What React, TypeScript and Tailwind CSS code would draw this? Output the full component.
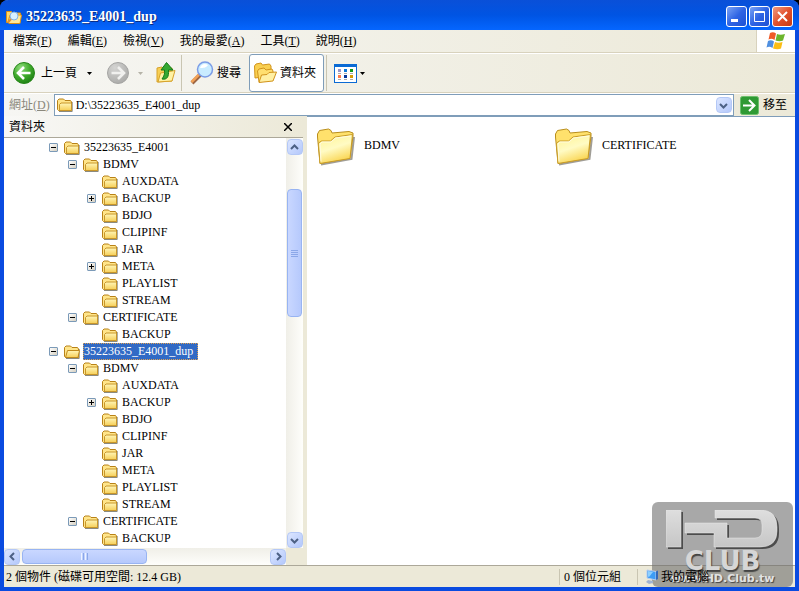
import { useState } from "react";
import type { ReactNode } from "react";

type TreeNode = {
	id: number;
	name: string;
	level: number;
	toggle?: "plus" | "minus";
};

const TREE: TreeNode[] = [
	{ id: 1, name: "35223635_E4001", level: 0, toggle: "minus" },
	{ id: 2, name: "BDMV", level: 1, toggle: "minus" },
	{ id: 3, name: "AUXDATA", level: 2 },
	{ id: 4, name: "BACKUP", level: 2, toggle: "plus" },
	{ id: 5, name: "BDJO", level: 2 },
	{ id: 6, name: "CLIPINF", level: 2 },
	{ id: 7, name: "JAR", level: 2 },
	{ id: 8, name: "META", level: 2, toggle: "plus" },
	{ id: 9, name: "PLAYLIST", level: 2 },
	{ id: 10, name: "STREAM", level: 2 },
	{ id: 11, name: "CERTIFICATE", level: 1, toggle: "minus" },
	{ id: 12, name: "BACKUP", level: 2 },
	{ id: 13, name: "35223635_E4001_dup", level: 0, toggle: "minus" },
	{ id: 14, name: "BDMV", level: 1, toggle: "minus" },
	{ id: 15, name: "AUXDATA", level: 2 },
	{ id: 16, name: "BACKUP", level: 2, toggle: "plus" },
	{ id: 17, name: "BDJO", level: 2 },
	{ id: 18, name: "CLIPINF", level: 2 },
	{ id: 19, name: "JAR", level: 2 },
	{ id: 20, name: "META", level: 2 },
	{ id: 21, name: "PLAYLIST", level: 2 },
	{ id: 22, name: "STREAM", level: 2 },
	{ id: 23, name: "CERTIFICATE", level: 1, toggle: "minus" },
	{ id: 24, name: "BACKUP", level: 2 },
];

const INDENT = ["pl-[45px]", "pl-[64px]", "pl-[83px]"];

const MENUS = [
	{ label: "檔案", accel: "F" },
	{ label: "編輯", accel: "E" },
	{ label: "檢視", accel: "V" },
	{ label: "我的最愛", accel: "A" },
	{ label: "工具", accel: "T" },
	{ label: "說明", accel: "H" },
];

function SmallFolder({ open }: { open?: boolean }) {
	return (
		<svg width="16" height="16" viewBox="0 0 16 16" className="shrink-0" aria-hidden="true">
			<defs>
				<linearGradient id="folderFill" x1="0" y1="0" x2="0" y2="1">
					<stop offset="0" stopColor="#fff6b8" />
					<stop offset="1" stopColor="#f6cf58" />
				</linearGradient>
			</defs>
			<path d="M2 14.500h13.200V5" fill="none" stroke="#8a8a80" />
			<path d="M.5 12.500V3.500L2 2h4.500L8 3.500h5.500L14.500 5v8.500h-13z" fill="#ffe58a" stroke="#b88218" />
			{open ? (
				<path d="M1.500 13.500 3.500 6.500h12l-1.500 7z" fill="url(#folderFill)" stroke="#c08a1c" />
			) : (
				<path d="M2.500 13.500V7.500L4 6h10.500v7.500z" fill="url(#folderFill)" stroke="#c8962a" />
			)}
		</svg>
	);
}

function LargeFolder() {
	return (
		<svg width="38" height="38" viewBox="0 0 38 38" aria-hidden="true">
			<defs>
				<linearGradient id="bigFront" x1=".3" y1="0" x2=".7" y2="1">
					<stop offset="0" stopColor="#fff59a" />
					<stop offset=".45" stopColor="#fffbc4" />
					<stop offset="1" stopColor="#f9cf3e" />
				</linearGradient>
			</defs>
			<path d="M4 36.500 34.500 31 37 9" fill="none" stroke="#77746a" strokeWidth="2" opacity=".7" />
			<path d="M.5 9V6L2.500 2.500l9-1.500L14 2.500l1 2.500 17-1.500 4 1.500v3L33 30 3 35.500z" fill="#ffe16c" stroke="#b98e1d" />
			<path d="M3 35.500 1.500 15l3-2h9L18 9l17.500-2.500L33 30.500z" fill="url(#bigFront)" stroke="#c99c27" />
			<path d="M4 33.500 3 16l2-2h9l4.500-4L34 8" fill="none" stroke="#fffbe0" />
		</svg>
	);
}

function TitleIcon() {
	return (
		<svg width="16" height="16" viewBox="0 0 16 16" aria-hidden="true">
			<path d="M.5 13.500V2.500h5L7 4h7.500v4l-1 6z" fill="#ffd869" stroke="#d89018" />
			<path d="M2 13 4 6h11.500L14 14.500H3z" fill="#ffe99a" stroke="#d89018" />
			<circle cx="8" cy="7" r="4" fill="#d7f0ff" stroke="#7fb2e8" />
			<path d="m5 10-3 3.500" stroke="#e09038" strokeWidth="2" />
		</svg>
	);
}

function RoundArrow({ forward }: { forward?: boolean }) {
	return (
		<svg width="24" height="24" viewBox="0 0 24 24" aria-hidden="true">
			<defs>
				<radialGradient id="backBall" cx=".35" cy=".25" r=".8">
					<stop offset="0" stopColor="#8fdc7c" />
					<stop offset=".55" stopColor="#3faa2b" />
					<stop offset="1" stopColor="#1d7f13" />
				</radialGradient>
				<radialGradient id="fwdBall" cx=".35" cy=".25" r=".8">
					<stop offset="0" stopColor="#d4d4d2" />
					<stop offset="1" stopColor="#aaaaa8" />
				</radialGradient>
			</defs>
			<circle
				cx="12"
				cy="12"
				r="10.500"
				fill={forward ? "url(#fwdBall)" : "url(#backBall)"}
				stroke={forward ? "#a5a5a3" : "#268619"}
			/>
			<path
				d={forward ? "M5.500 12h12M12 6l6 6-6 6" : "M18.500 12h-12M12 6l-6 6 6 6"}
				fill="none"
				stroke={forward ? "#f0f0ee" : "#fff"}
				strokeWidth="2.600"
			/>
		</svg>
	);
}

function UpFolder() {
	return (
		<svg width="20" height="24" viewBox="0 0 20 24" aria-hidden="true">
			<path d="M1 21V7l5-1 2 2 8-1v13z" fill="#f7cf55" stroke="#d7a22a" />
			<path d="m2 21 2.500-9L19 9.500 16 20z" fill="#fff2a4" stroke="#d7a22a" />
			<path d="M6 18c5 1 7-2 6.500-9H17L10.500 1.500 5 9h3.500c.5 4-.5 6-2.500 9z" fill="#35a832" stroke="#147b18" />
		</svg>
	);
}

function SearchIcon() {
	return (
		<svg width="24" height="24" viewBox="0 0 24 24" aria-hidden="true">
			<path d="m2 22 8-8" stroke="#9b6544" strokeWidth="4" />
			<path d="m1.500 21 7.500-7.500" stroke="#f2a257" strokeWidth="2.500" />
			<circle cx="15" cy="8.500" r="7.500" fill="#c9ecff" stroke="#7b9ce6" strokeWidth="1.500" />
			<path d="M10 7c1-4 5-5 8-3-2 3-5 3-8 3z" fill="#fff" />
		</svg>
	);
}

function FoldersIcon() {
	return (
		<svg width="24" height="22" viewBox="0 0 24 22" aria-hidden="true">
			<path d="m1 16-.5-12L2 2l5-1 1.500 2 7-1 1.500 2v10z" fill="#f9cf50" stroke="#d2941c" />
			<path d="M5 20 3.500 9 5 7l5-1 2 2 6-1 1 2v9z" fill="#ffdf70" stroke="#d2941c" />
			<path d="M5 20.500 7.500 13l5.500-.5 2-2 7.500-.5-3.500 9z" fill="#fff0a4" stroke="#d2941c" />
		</svg>
	);
}

function ViewsIcon() {
	const cells = ["#9a95c8", "#0b78d8", "#10981a", "#ff7a4a", "#06369a", "#d49a08"];
	return (
		<svg width="23" height="19" viewBox="0 0 23 19" aria-hidden="true">
			<rect x=".5" y=".5" width="22" height="18" fill="#fff" stroke="#0a6ad4" />
			<rect width="23" height="3" fill="#0a6ad4" />
			{cells.map((color, i) => (
				<g key={color}>
					<rect x={4 + (i % 3) * 6} y={i < 3 ? 5 : 11} width="3" height="3" fill={color} />
					<rect x={4 + (i % 3) * 6} y={i < 3 ? 9 : 15} width="3" height="1" fill="#aaa" />
				</g>
			))}
		</svg>
	);
}

function WindowsFlag() {
	return (
		<svg width="20" height="18" viewBox="0 0 20 18" aria-hidden="true">
			<path d="M4 1c2-1 4-1 6 .5L8.500 8C6.500 6.500 4.500 6.500 2.500 7.500z" fill="#ef5a28" />
			<path d="M11 2c2 1 5 1 8 0l-2 6.500c-2 1-5 1-7.500 0z" fill="#6cb52d" />
			<path d="M2 9c2-1 4-1 6 .5L6.500 16C4.500 14.500 2.500 14.500.5 15.500z" fill="#4f8fe0" />
			<path d="M9 10c2 1 5 1 7.500 0L15 16.500c-2 1-5 1-8 0z" fill="#fbbd14" />
		</svg>
	);
}

function ComputerIcon() {
	return (
		<svg width="14" height="16" viewBox="0 0 14 16" aria-hidden="true">
			<path d="m2 1 9 1.500V11L2 9z" fill="#3d9cf5" stroke="#b9cdee" />
			<path d="m3 2 5 1-4 5-1-.5z" fill="#8fd0ff" />
			<path d="m11 2.500 2-1V10l-2 1z" fill="#3568b8" />
			<path d="m3 11 5 1v2l-4 1-3-2z" fill="#9fb2d2" />
		</svg>
	);
}

function Chevron({ dir }: { dir: "up" | "down" | "left" | "right" }) {
	const d = {
		up: "M1 6 4.500 2.500 8 6",
		down: "M1 3 4.500 6.500 8 3",
		left: "M6 1 2.500 4.500 6 8",
		right: "M3 1 6.500 4.500 3 8",
	}[dir];
	return (
		<svg width="9" height="9" viewBox="0 0 9 9" aria-hidden="true">
			<path d={d} fill="none" stroke="#4d6185" strokeWidth="2" />
		</svg>
	);
}

function Caret({ color }: { color: string }) {
	return (
		<svg width="5" height="3" viewBox="0 0 5 3" aria-hidden="true">
			<path d="M0 0h5L2.500 3z" fill={color} />
		</svg>
	);
}

function ScrollButton({ dir, label }: { dir: "up" | "down" | "left" | "right"; label: string }) {
	return (
		<button
			type="button"
			aria-label={label}
			className="flex size-4 shrink-0 items-center justify-center rounded-sm border border-[#b4c8f6] bg-linear-to-br from-[#dce6ff] to-[#b4c8fb]"
		>
			<Chevron dir={dir} />
		</button>
	);
}

function CaptionButton({ label, close, children }: { label: string; close?: boolean; children: ReactNode }) {
	const color = close ? "from-[#f0997f] via-[#e2512c] to-[#c63a12]" : "from-[#7ba2f4] via-[#2f64e4] to-[#1c50d4]";
	return (
		<button
			type="button"
			aria-label={label}
			className={`flex size-[21px] items-center justify-center rounded-[3px] border border-white bg-linear-to-br ${color}`}
		>
			<svg width="15" height="15" viewBox="0 0 15 15" fill="none" stroke="#fff" aria-hidden="true">
				{children}
			</svg>
		</button>
	);
}

function Separator() {
	return <div className="h-9 w-px shrink-0 bg-[#c9c5b2]" />;
}

function TreeRow({ node, selected, onSelect }: { node: TreeNode; selected: boolean; onSelect: () => void }) {
	return (
		<li className={`flex h-[17px] items-center ${INDENT[node.level]}`}>
			{node.toggle ? (
				<button
					type="button"
					aria-label={node.toggle === "plus" ? "展開" : "摺疊"}
					className="mr-1.5 size-[9px] shrink-0 rounded-[1px] border border-[#7b9ab8] bg-linear-to-br from-white to-[#d5cfc0]"
				>
					<svg width="7" height="7" viewBox="0 0 7 7" stroke="#000" className="block" aria-hidden="true">
						<path d={node.toggle === "plus" ? "M1 3.500h5M3.500 1v5" : "M1 3.500h5"} />
					</svg>
				</button>
			) : (
				<span className="mr-1.5 w-[9px] shrink-0" />
			)}
			<SmallFolder open={selected} />
			<button
				type="button"
				onClick={onSelect}
				className={`ml-[3px] h-[17px] border border-dotted leading-[15px] whitespace-nowrap ${
					selected ? "border-[#e0a050] bg-[#316ac5] pr-1 text-white" : "border-transparent"
				}`}
			>
				{node.name}
			</button>
		</li>
	);
}

function FolderPane() {
	const [selectedId, setSelectedId] = useState(13);

	return (
		<aside className="flex w-[299px] shrink-0 flex-col bg-white">
			<div className="flex h-[22px] shrink-0 items-center justify-between border-b border-[#aca899] bg-linear-to-r from-[#f8f8f6] to-[#ece9d8] pr-[10px] pl-[5px]">
				<h2>資料夾</h2>
				<button type="button" aria-label="關閉" className="p-px">
					<svg width="8" height="8" viewBox="0 0 8 8" aria-hidden="true">
						<path d="m0 0 8 8M8 0 0 8" stroke="#000" strokeWidth="1.500" />
					</svg>
				</button>
			</div>
			<div className="flex min-h-0 flex-1">
				<ul className="min-w-0 flex-1 overflow-hidden pt-px">
					{TREE.map((node) => (
						<TreeRow
							key={node.id}
							node={node}
							selected={node.id === selectedId}
							onSelect={() => setSelectedId(node.id)}
						/>
					))}
				</ul>
				<div className="flex w-[17px] flex-col items-center bg-linear-to-r from-[#f0efe8] to-[#fefefb] pt-px">
					<ScrollButton dir="up" label="向上捲動" />
					<div className="mt-[34px] flex h-32 w-[15px] flex-col items-center justify-center gap-px rounded-sm border border-[#98b4f2] bg-linear-to-r from-[#c9d7ff] to-[#b6c9fc]">
						<i className="h-px w-[7px] bg-[#8ba7e8]" />
						<i className="h-px w-[7px] bg-[#8ba7e8]" />
						<i className="h-px w-[7px] bg-[#8ba7e8]" />
						<i className="h-px w-[7px] bg-[#8ba7e8]" />
					</div>
					<div className="flex-1" />
					<ScrollButton dir="down" label="向下捲動" />
				</div>
			</div>
			<div className="flex h-[17px] shrink-0">
				<div className="flex flex-1 items-center bg-linear-to-b from-[#f0efe8] to-[#fefefb]">
					<ScrollButton dir="left" label="向左捲動" />
					<div className="ml-0.5 flex h-[15px] w-[125px] items-center justify-center gap-px rounded-sm border border-[#98b4f2] bg-linear-to-b from-[#c9d7ff] to-[#b6c9fc]">
						<i className="h-[7px] w-px bg-[#eef3ff]" />
						<i className="h-[7px] w-px bg-[#8ba7e8]" />
						<i className="h-[7px] w-px bg-[#eef3ff]" />
						<i className="h-[7px] w-px bg-[#8ba7e8]" />
					</div>
					<div className="flex-1" />
					<ScrollButton dir="right" label="向右捲動" />
				</div>
				<div className="w-[17px] bg-[#ece9d8]" />
			</div>
		</aside>
	);
}

const CLUB_FRAME = "M19 13h42v15h28q7 0 7-7v-6q0-7-7-7H49V0h45q17 0 17 17v4q0 16-17 16H48V23H19z";

function ClubBadge() {
	return (
		<div className="pointer-events-none absolute right-0.5 bottom-0 flex h-[85px] w-[141px] flex-col items-center rounded-md bg-[#6e6e6e]/60 pt-2">
			<svg width="114" height="40" viewBox="0 0 114 40" role="img" aria-label="HD" className="shrink-0">
				<defs>
					<linearGradient id="steel" x1="0" y1="0" x2="0" y2="1">
						<stop offset="0" stopColor="#dedede" />
						<stop offset="1" stopColor="#c6c6c6" />
					</linearGradient>
				</defs>
				<g fill="#4c4c4c" transform="translate(2 2)">
					<rect width="15" height="37" />
					<path d={CLUB_FRAME} />
				</g>
				<g fill="url(#steel)" stroke="#e8e8e8" strokeWidth=".5">
					<rect width="15" height="37" />
					<path d={CLUB_FRAME} />
				</g>
			</svg>
			<div className="font-['DejaVu_Sans'] text-[26px] leading-[22px] font-bold text-[#d6d6d6] [text-shadow:1px_2px_1px_#444]">
				CLUB
			</div>
			<div className="font-['DejaVu_Sans'] text-[11px] leading-[14px] font-bold text-[#e2e2e2] [text-shadow:1px_1px_1px_#444]">
				www.HD.Club.tw
			</div>
		</div>
	);
}

export default function App() {
	const [address, setAddress] = useState("D:\\35223635_E4001_dup");

	return (
		<div className="h-screen bg-black font-['Liberation_Serif','Noto_Sans_CJK_TC',serif] text-[12px] leading-4 text-black">
			<div className="relative flex h-full flex-col rounded-t-lg border-x-4 border-b-4 border-[#0a4be0] bg-[#ece9d8]">
				<header className="-mx-1 flex h-[30px] shrink-0 items-center gap-1 rounded-t-lg bg-linear-to-b from-[#0a50d8] via-[#0054e3] to-[#0566ff] pt-[3px] pr-1.5 pl-1.5">
					<TitleIcon />
					<h1 className="flex-1 text-[14px] font-bold text-white [text-shadow:1px_1px_#0a2a80]">35223635_E4001_dup</h1>
					<div className="flex gap-0.5">
						<CaptionButton label="最小化">
							<path d="M2 11.500h7" strokeWidth="3" />
						</CaptionButton>
						<CaptionButton label="最大化">
							<path d="M2.500 2.500h10v10h-10zM2 3.500h11" />
						</CaptionButton>
						<CaptionButton label="關閉" close>
							<path d="m3 3 9 9M12 3l-9 9" strokeWidth="2" />
						</CaptionButton>
					</div>
				</header>

				<nav className="flex h-[23px] shrink-0 border-b border-[#d8d2bd] bg-linear-to-r from-[#f6f6f3] to-[#ece9d8] pl-px">
					<div className="flex flex-1 items-center">
						{MENUS.map((menu) => (
							<button key={menu.accel} type="button" className="px-2">
								{menu.label}(<u>{menu.accel}</u>)
							</button>
						))}
					</div>
					<div className="flex w-[39px] items-center justify-center border-l border-[#d8d2bd] bg-white">
						<WindowsFlag />
					</div>
				</nav>

				<div className="flex h-10 shrink-0 items-center border-y border-t-white border-b-[#d8d2bd] bg-linear-to-r from-[#f6f6f3] to-[#ece9d8] pl-2">
					<button type="button" className="flex items-center gap-[5px]">
						<RoundArrow />
						上一頁
					</button>
					<button type="button" aria-label="上一頁清單" className="ml-1 p-1.5">
						<Caret color="#000" />
					</button>
					<button type="button" aria-label="下一頁" disabled className="ml-2">
						<RoundArrow forward />
					</button>
					<button type="button" aria-label="下一頁清單" disabled className="px-2">
						<Caret color="#b5b3a8" />
					</button>
					<button type="button" aria-label="上移一層" className="mx-[5px]">
						<UpFolder />
					</button>
					<Separator />
					<button type="button" className="mx-2 flex items-center gap-[3px]">
						<SearchIcon />
						搜尋
					</button>
					<button
						type="button"
						aria-pressed="true"
						className="flex h-[38px] w-[75px] items-center gap-0.5 rounded-[3px] border border-[#7f9db9] bg-white pl-1"
					>
						<FoldersIcon />
						資料夾
					</button>
					<div className="w-0.5" />
					<Separator />
					<button type="button" aria-label="檢視" className="ml-[7px] flex items-center gap-[3px]">
						<ViewsIcon />
						<Caret color="#000" />
					</button>
				</div>

				<form
					className="flex h-[23px] shrink-0 items-center border-t border-white bg-linear-to-r from-[#f6f6f3] to-[#ece9d8] pl-[5px]"
					onSubmit={(e) => e.preventDefault()}
				>
					<label htmlFor="address" className="mr-1 text-[#8a887c]">
						網址(<u>D</u>)
					</label>
					<div className="flex h-[22px] flex-1 items-center border border-[#7f9db9] bg-white pr-px pl-0.5">
						<SmallFolder />
						<input
							id="address"
							value={address}
							onChange={(e) => setAddress(e.target.value)}
							className="ml-[3px] min-w-0 flex-1 outline-none"
						/>
						<ScrollButton dir="down" label="網址清單" />
					</div>
					<button type="submit" className="mx-1.5 flex items-center gap-1 pr-0.5">
						<svg width="19" height="19" viewBox="0 0 19 19" aria-hidden="true">
							<rect x=".5" y=".5" width="18" height="18" rx="2" fill="#2f9a34" stroke="#6cbf6c" />
							<path d="M3 9.500h11M9 4l5.500 5.500L9 15" fill="none" stroke="#fff" strokeWidth="2" />
						</svg>
						移至
					</button>
				</form>

				<div className="flex min-h-0 flex-1">
					<FolderPane />
					<div className="w-1 shrink-0 bg-[#ece9d8]" />
					<main className="flex flex-1 flex-wrap content-start border-t border-[#7f9db9] bg-white pt-[11px] pl-2.5">
						{["BDMV", "CERTIFICATE"].map((name) => (
							<button key={name} type="button" className="flex w-[238px] items-center gap-[9px] text-left">
								<LargeFolder />
								<span className="pb-1">{name}</span>
							</button>
						))}
					</main>
				</div>

				<footer className="flex h-[22px] shrink-0 items-center border-t border-[#aca899] bg-[#ece9d8]">
					<p className="flex-1 pl-0.5">2 個物件 (磁碟可用空間: 12.4 GB)</p>
					<p className="w-[78px] border-l border-[#c9c5b2] pl-1">0 個位元組</p>
					<p className="relative z-10 flex w-[158px] items-center gap-0.5 border-l border-[#c9c5b2] pl-[7px]">
						<ComputerIcon />
						我的電腦
					</p>
				</footer>

				<ClubBadge />
			</div>
		</div>
	);
}
